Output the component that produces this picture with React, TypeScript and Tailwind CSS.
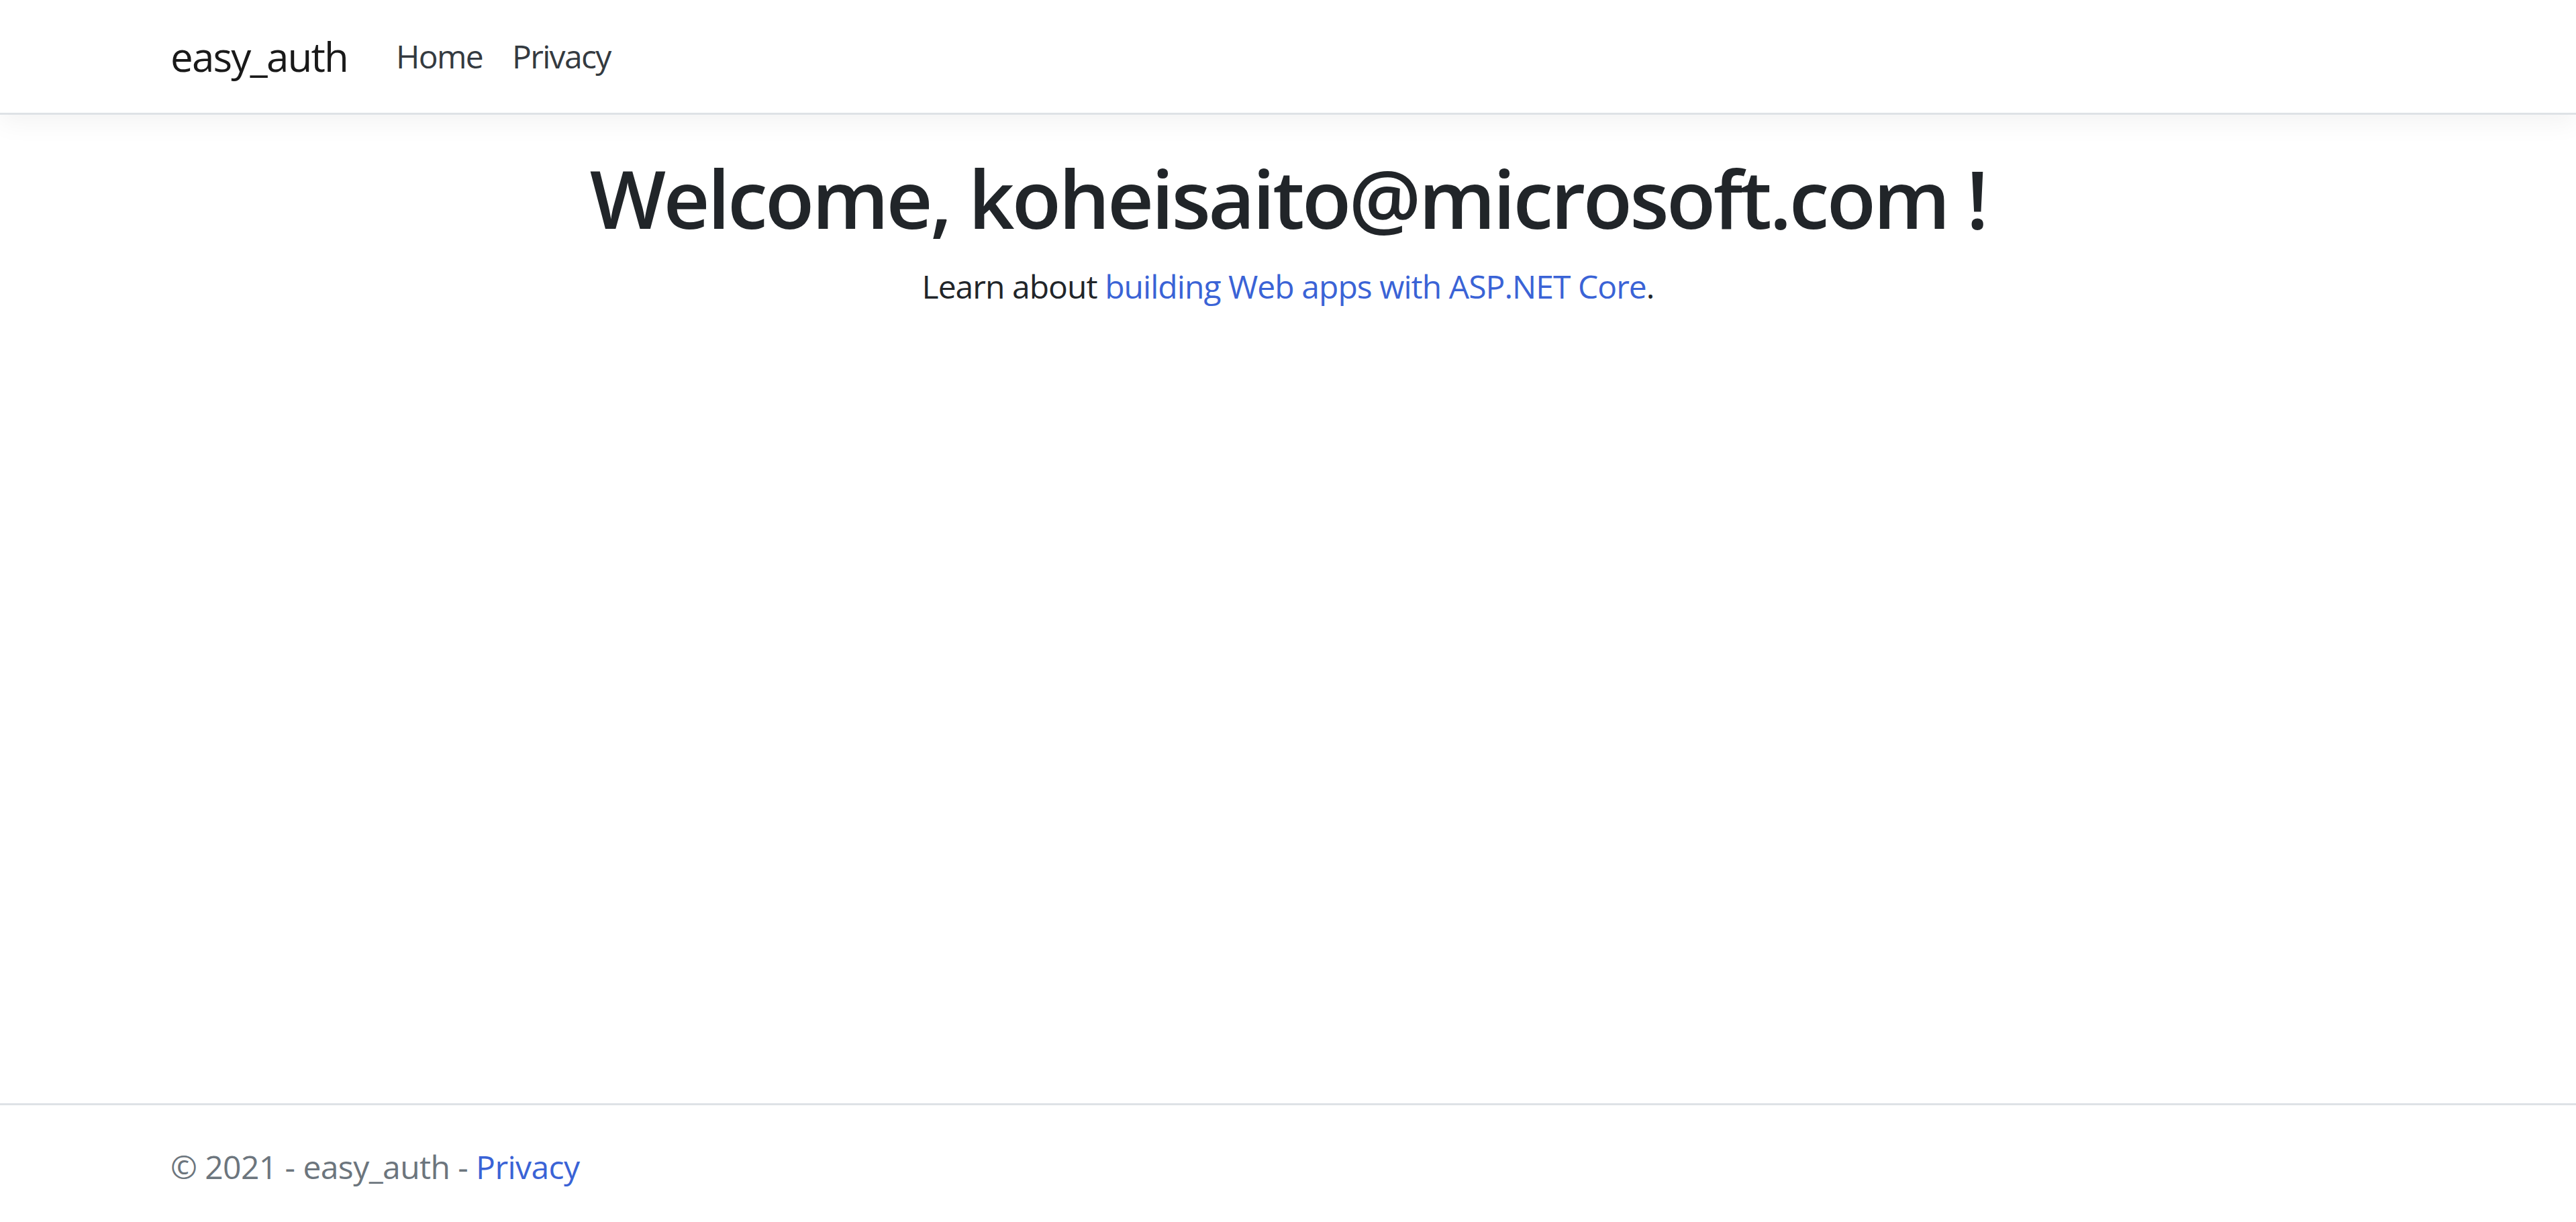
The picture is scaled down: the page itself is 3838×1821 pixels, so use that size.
import React from 'react';

const App: React.FC = () => {
  return (
    <div className="flex flex-col h-screen bg-white text-[#212529] font-['Open_Sans','Noto_Sans',sans-serif]">
      {/* Navbar */}
      <header className="bg-white border-b-[3px] border-[#dee2e6] shadow-[0_12px_36px_rgba(0,0,0,0.05)] mb-[52px]">
        <nav className="mx-auto w-[3420px] px-[45px] py-[24px] flex items-center h-[168px]">
          <a className="text-[60px] leading-[1.5] mr-[48px] text-black/90 tracking-[-0.03em]">easy_auth</a>
          <ul className="flex items-center">
            <li><a className="block pl-[24px] pr-[20px] text-[48px] leading-[1.5] text-[#343a40] tracking-[-0.035em]">Home</a></li>
            <li><a className="block px-[24px] text-[48px] leading-[1.5] text-[#343a40] tracking-[-0.035em]">Privacy</a></li>
          </ul>
        </nav>
      </header>

      {/* Main */}
      <main className="flex-1 mx-auto w-[3420px] px-[45px]">
        <div className="text-center">
          <h1 className="text-[120px] leading-[1.2] font-semibold mb-[24px] tracking-[-0.03em]">Welcome, koheisaito@microsoft.com !</h1>
          <p className="text-[48px] leading-[1.5] tracking-[-0.02em]">
            Learn about <a className="text-[#3a63d6]">building Web apps with ASP.NET Core</a>.
          </p>
        </div>
      </main>

      {/* Footer */}
      <footer className="border-t-[3px] border-[#dee2e6] h-[177px] text-[#6c757d]">
        <div className="mx-auto w-[3420px] px-[45px] text-[48px] leading-[184px] tracking-[-0.012em]">
          © 2021 - easy_auth - <a className="text-[#3a63d6]">Privacy</a>
        </div>
      </footer>
    </div>
  );
};

export default App;
